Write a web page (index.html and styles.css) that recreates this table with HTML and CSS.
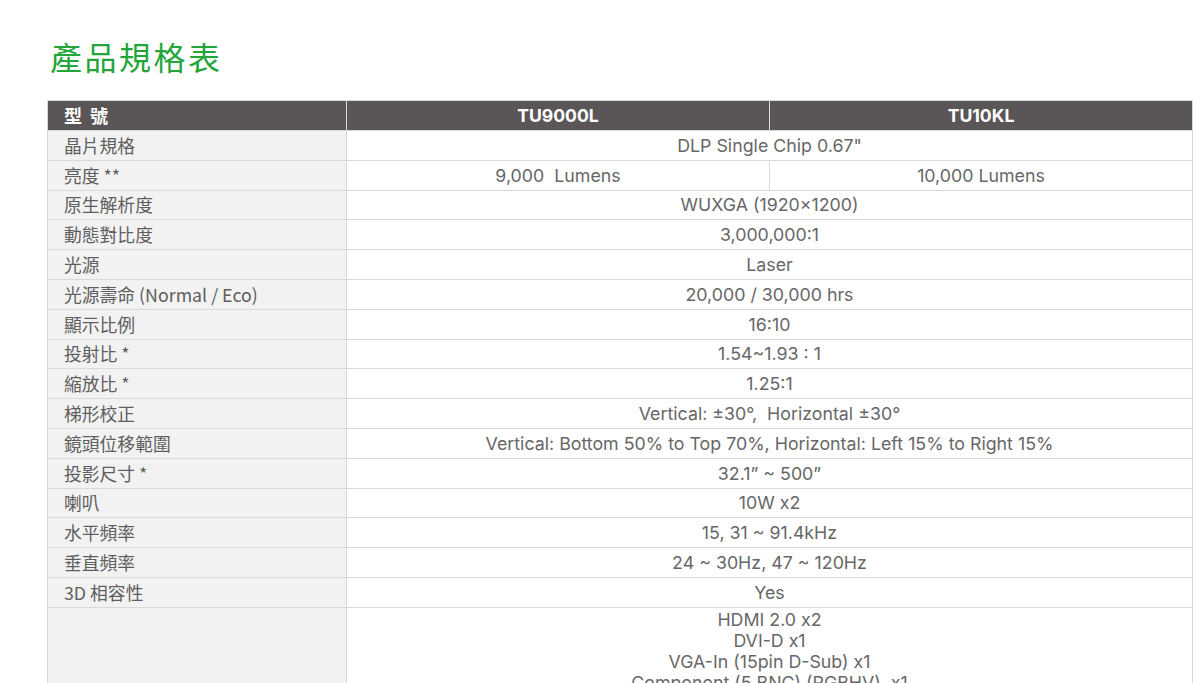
FILE: index.html
```html
<!DOCTYPE html>
<html lang="zh-Hant">
<head>
<meta charset="utf-8">
<title>產品規格表</title>
<link rel="stylesheet" href="styles.css">
</head>
<body>
<main class="page">
  <h1 class="title">產品規格表</h1>
  <table class="spec">
    <colgroup>
      <col class="c-label">
      <col class="c-val">
      <col class="c-val">
    </colgroup>
    <thead>
      <tr>
        <th class="lbl">型&nbsp;號</th>
        <th>TU9000L</th>
        <th>TU10KL</th>
      </tr>
    </thead>
    <tbody>
      <tr><td class="lbl">晶片規格</td><td colspan="2">DLP Single Chip 0.67"</td></tr>
      <tr><td class="lbl">亮度 **</td><td>9,000&nbsp; Lumens</td><td>10,000 Lumens</td></tr>
      <tr><td class="lbl">原生解析度</td><td colspan="2">WUXGA (1920×1200)</td></tr>
      <tr><td class="lbl">動態對比度</td><td colspan="2">3,000,000:1</td></tr>
      <tr><td class="lbl">光源</td><td colspan="2">Laser</td></tr>
      <tr><td class="lbl">光源壽命 (Normal / Eco)</td><td colspan="2">20,000 / 30,000 hrs</td></tr>
      <tr><td class="lbl">顯示比例</td><td colspan="2">16:10</td></tr>
      <tr><td class="lbl">投射比 *</td><td colspan="2">1.54~1.93 : 1</td></tr>
      <tr><td class="lbl">縮放比 *</td><td colspan="2">1.25:1</td></tr>
      <tr><td class="lbl">梯形校正</td><td colspan="2">Vertical: ±30°,&nbsp; Horizontal ±30°</td></tr>
      <tr><td class="lbl">鏡頭位移範圍</td><td colspan="2">Vertical: Bottom 50% to Top 70%, Horizontal: Left 15% to Right 15%</td></tr>
      <tr><td class="lbl">投影尺寸 *</td><td colspan="2">32.1” ~ 500”</td></tr>
      <tr><td class="lbl">喇叭</td><td colspan="2">10W x2</td></tr>
      <tr><td class="lbl">水平頻率</td><td colspan="2">15, 31 ~ 91.4kHz</td></tr>
      <tr><td class="lbl">垂直頻率</td><td colspan="2">24 ~ 30Hz, 47 ~ 120Hz</td></tr>
      <tr><td class="lbl">3D 相容性</td><td colspan="2">Yes</td></tr>
      <tr class="multi"><td class="lbl"></td><td colspan="2">HDMI 2.0 x2<br>DVI-D x1<br>VGA-In (15pin D-Sub) x1<br>Component (5 BNC) (RGBHV)&nbsp; x1</td></tr>
    </tbody>
  </table>
</main>
</body>
</html>
```
FILE: styles.css
```css
html, body {
  margin: 0;
  padding: 0;
  background: #ffffff;
}

.page {
  padding: 34px 0 0 47px;
  font-family: Inter, "Noto Sans CJK TC", sans-serif;
}

.title {
  margin: 0 0 22px 3px;
  font-family: "Noto Sans CJK TC", sans-serif;
  font-weight: 400;
  font-size: 32px;
  line-height: 44px;
  letter-spacing: 2.5px;
  color: #23a53a;
}

.spec {
  width: 1145px;
  border-collapse: collapse;
  table-layout: fixed;
  color: #676767;
  font-size: 17.8px;
}

.c-label { width: 299px; }
.c-val { width: 423px; }

.spec th,
.spec td {
  border: 1.5px solid #d9d9d9;
  padding: 0;
  height: 28.8px;
  text-align: center;
  vertical-align: middle;
  line-height: 21px;
}

.spec thead th {
  background: #5a5657;
  color: #ffffff;
  font-weight: 700;
  font-size: 17.6px;
  border-color: #d9d9d9;
  height: 29px;
}

.spec thead th.lbl {
  font-family: "Noto Sans CJK TC", sans-serif;
  font-size: 18px;
  text-align: left;
  padding-left: 16px;
  letter-spacing: 2px;
}

.spec td.lbl {
  background: #f2f2f2;
  text-align: left;
  padding-left: 16px;
  font-family: "Noto Sans CJK TC", sans-serif;
  font-size: 17.8px;
  color: #5e5e5e;
}

.spec tr.multi td {
  vertical-align: top;
  padding-top: 1px;
  padding-bottom: 24px;
}
```
